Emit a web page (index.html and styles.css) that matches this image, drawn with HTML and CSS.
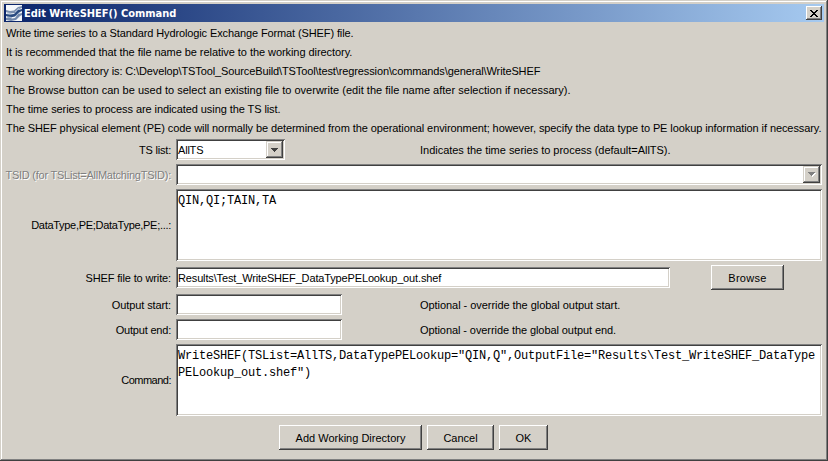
FILE: index.html
```html
<!DOCTYPE html>
<html lang="en">
<head>
<meta charset="utf-8">
<title>Edit WriteSHEF() Command</title>
<link rel="stylesheet" href="styles.css">
</head>
<body>
<div class="window">
  <header class="titlebar">
    <svg class="app-icon" viewBox="0 0 16 16" width="16" height="16">
      <rect width="16" height="16" fill="#f4f7fa"/>
      <path d="M0 5l4 1 4-.5L12 2l4-1v2l-3 1-4 4-5 .5L0 7z" fill="#7b8fae"/>
      <path d="M0 9l4 .5L8 9l4-4 4-1v2l-3 1.500-4 4-5 1L0 11z" fill="#284a80"/>
      <path d="M0 13l3-1 3 1.500 3-.5 3-4 4-1v2l-2 1-4 4-5 1-5-1z" fill="#7188ab"/>
      <path d="M1 8l4 .3M9 7l4-4M2 12l4 .5M10 11l4-4" stroke="#a9bad2" fill="none"/>
    </svg>
    <h1 class="title">Edit WriteSHEF() Command</h1>
    <button class="close" aria-label="Close"><svg viewBox="0 0 8 7" width="8" height="7" shape-rendering="crispEdges"><path d="M0 0h2v1h1v1h2V1h1V0h2v1H7v1H6v1H5v1h1v1h1v1h1v1H6V6H5V5H3v1H2v1H0V6h1V5h1V4h1V3H2V2H1V1H0z"/></svg></button>
  </header>
  <section class="notes">
    <p class="n1">Write time series to a Standard Hydrologic Exchange Format (SHEF) file.</p>
    <p class="n2">It is recommended that the file name be relative to the working directory.</p>
    <p class="n3">The working directory is: C:\Develop\TSTool_SourceBuild\TSTool\test\regression\commands\general\WriteSHEF</p>
    <p class="n4">The Browse button can be used to select an existing file to overwrite (edit the file name after selection if necessary).</p>
    <p class="n5">The time series to process are indicated using the TS list.</p>
    <p class="n6">The SHEF physical element (PE) code will normally be determined from the operational environment; however, specify the data type to PE lookup information if necessary.</p>
  </section>
  <main class="form">
    <div class="row line">
      <div class="label l1">TS list:</div>
      <div class="field combo small"><span class="value v1">AllTS</span><span class="drop"><svg viewBox="0 0 7 4" width="7" height="4" shape-rendering="crispEdges"><path d="M0 0h7v1H6v1H5v1H4v1H3V3H2V2H1V1H0z" fill="#404040"/></svg></span></div>
      <div class="hint h1">Indicates the time series to process (default=AllTS).</div>
    </div>
    <div class="row line">
      <div class="label disabled l2">TSID (for TSList=AllMatchingTSID):</div>
      <div class="field combo wide"><span class="value"></span><span class="drop"><svg viewBox="0 0 8 5" width="8" height="5" shape-rendering="crispEdges"><path d="M1 1h7v1H7v1H6v1H5v1H4V4H3V3H2V2H1z" fill="#fff"/><path d="M0 0h7v1H6v1H5v1H4v1H3V3H2V2H1V1H0z" fill="#808080"/></svg></span></div>
    </div>
    <div class="row">
      <div class="label l3">DataType,PE;DataType,PE;...:</div>
      <div class="field area wide">QIN,QI;TAIN,TA</div>
    </div>
    <div class="row file-row">
      <div class="label l4">SHEF file to write:</div>
      <div class="field file"><span class="value v2">Results\Test_WriteSHEF_DataTypePELookup_out.shef</span></div>
      <button class="btn browse">Browse</button>
    </div>
    <div class="row line">
      <div class="label l5">Output start:</div>
      <div class="field date"></div>
      <div class="hint h2">Optional - override the global output start.</div>
    </div>
    <div class="row line">
      <div class="label l6">Output end:</div>
      <div class="field date"></div>
      <div class="hint h3">Optional - override the global output end.</div>
    </div>
    <div class="row">
      <div class="label l7">Command:</div>
      <div class="field area wide">WriteSHEF(TSList=AllTS,DataTypePELookup="QIN,Q",OutputFile="Results\Test_WriteSHEF_DataType<br>PELookup_out.shef")</div>
    </div>
  </main>
  <footer class="actions">
    <button class="btn add">Add Working Directory</button>
    <button class="btn cancel">Cancel</button>
    <button class="btn ok">OK</button>
  </footer>
</div>
</body>
</html>
```
FILE: styles.css
```css
* { box-sizing: border-box; }
body { margin: 0; background: #d4d0c8; }
.window {
  width: 828px; height: 461px; padding: 4px;
  background: #d4d0c8; color: #000;
  font: 11px/19px "Liberation Sans", Arial, sans-serif;
  box-shadow: inset -1px -1px #404040, inset 1px 1px #d4d0c8, inset -2px -2px #808080, inset 2px 2px #fff;
  display: flex; flex-direction: column;
}
.titlebar {
  display: flex; align-items: center; height: 18px; padding: 0 2px;
  background: linear-gradient(90deg, #0a246a, #a6caf0);
}
.title { flex: 1; margin: 0 0 0 2px; padding-top: 1px; color: #fff; font: bold 11px/18px "DejaVu Sans Condensed", "DejaVu Sans", sans-serif; letter-spacing: -0.02px; white-space: nowrap; }
.close, .btn {
  border: 0; padding: 0; background: #d4d0c8; color: #000;
  font: 11px/1 "Liberation Sans", Arial, sans-serif; white-space: nowrap;
  display: flex; align-items: center; justify-content: center;
  box-shadow: inset -1px -1px #404040, inset 1px 1px #fff, inset -2px -2px #808080;
}
.close { width: 16px; height: 14px; }
.notes { padding: 2px 0 0 2px; }
.notes p { margin: 0; height: 19px; white-space: nowrap; }
.n1 { letter-spacing: -0.115px; }
.n2 { letter-spacing: -0.06px; }
.n3 { letter-spacing: -0.115px; }
.n4 { letter-spacing: 0.017px; }
.n5 { letter-spacing: -0.08px; }
.n6 { letter-spacing: -0.088px; }
.form { display: flex; flex-direction: column; gap: 4px; padding-top: 1px; }
.row { display: flex; align-items: center; }
.line { height: 21px; }
.label { width: 167px; margin-right: 5px; display: flex; justify-content: flex-end; white-space: nowrap; }
.line .label, .line .hint, .file-row .label { padding-top: 2px; }
.l1 { letter-spacing: -0.2px; }
.l2 { letter-spacing: -0.24px; }
.l3 { letter-spacing: -0.29px; }
.l4 { letter-spacing: -0.13px; }
.l5 { letter-spacing: -0.1px; }
.l6 { letter-spacing: -0.2px; }
.l7 { letter-spacing: -0.5px; }
.h1 { letter-spacing: -0.02px; }
.h2 { letter-spacing: -0.05px; }
.h3 { letter-spacing: -0.08px; }
.v1 { letter-spacing: -0.2px; }
.v2 { letter-spacing: -0.145px; }
.disabled { color: #808080; text-shadow: 1px 1px #fff; }
.field {
  height: 21px; background: #fff; padding: 2px; line-height: 18px; white-space: nowrap;
  box-shadow: inset 1px 1px #808080, inset -1px -1px #fff, inset 2px 2px #404040, inset -2px -2px #d4d0c8;
}
.wide { width: 646px; }
.area { height: 72px; padding: 4px 2px 2px; font: 12px/17px "Liberation Mono", "Courier New", monospace; letter-spacing: -0.2px; }
.combo { display: flex; }
.small { width: 109px; }
.value { flex: 1; }
.drop {
  width: 17px; height: 17px; background: #d4d0c8; display: flex; align-items: center; justify-content: center;
  box-shadow: inset -1px -1px #404040, inset 1px 1px #d4d0c8, inset -2px -2px #808080, inset 2px 2px #fff;
}
.file { width: 494px; }
.date { width: 166px; }
.small + .hint { margin-left: 135px; }
.date + .hint { margin-left: 78px; }
.file-row { height: 25px; }
.btn { height: 25px; padding-top: 2px; }
.browse { width: 73px; margin-left: 41px; letter-spacing: 0.3px; }
.actions { display: flex; justify-content: center; gap: 5px; padding-top: 9px; padding-right: 1px; }
.add { width: 143px; }
.cancel { width: 67px; }
.ok { width: 49px; }
```
